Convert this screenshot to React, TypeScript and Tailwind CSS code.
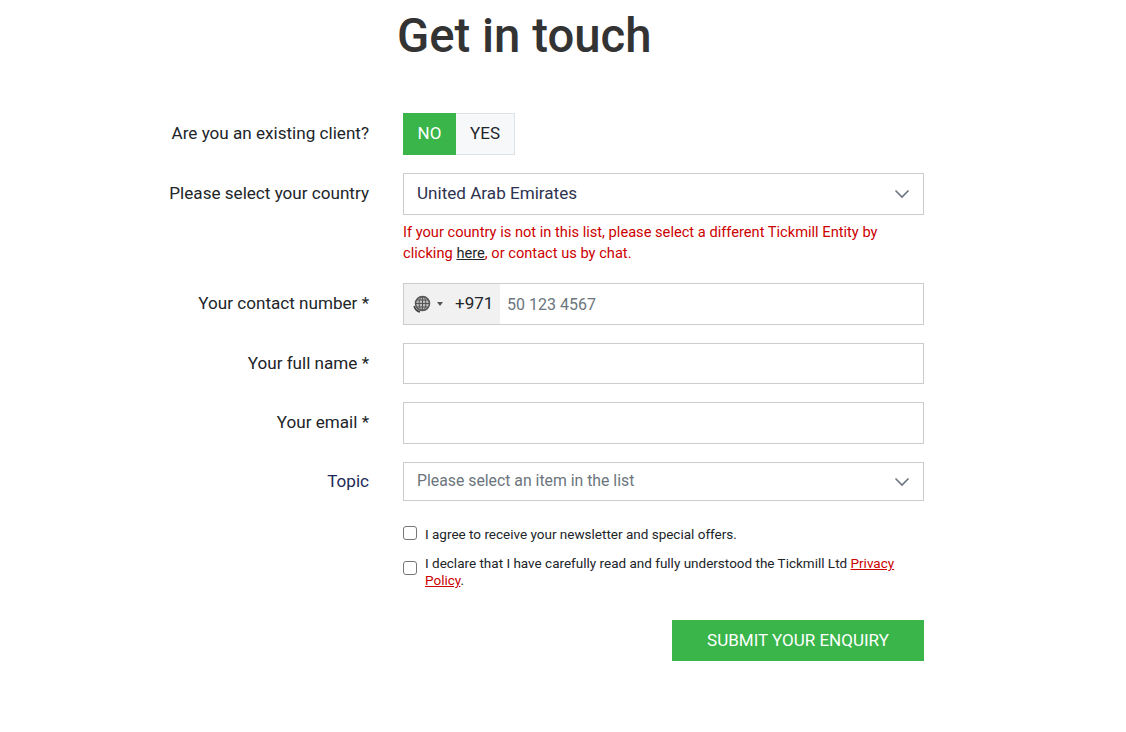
import React from "react";

const font = { fontFamily: "Roboto, sans-serif" };

function Chevron() {
  return (
    <svg width="16" height="10" viewBox="0 0 16 10" fill="none" className="shrink-0">
      <path d="M1.5 1.5 L8 8 L14.5 1.5" stroke="#6c757d" strokeWidth="1.6" />
    </svg>
  );
}

function Globe() {
  return (
    <svg width="18" height="18" viewBox="0 0 18 18" fill="none" className="shrink-0">
      <circle cx="9.5" cy="8.5" r="7" fill="#bbb" stroke="#555" strokeWidth="1.5" />
      <ellipse cx="9.5" cy="8.5" rx="3.4" ry="7" stroke="#555" strokeWidth="1" />
      <path d="M9.5 1.5V15.5M2.5 8.5H16.5M3.6 5H15.4M3.6 12H15.4" stroke="#555" strokeWidth="1" />
      <path d="M1.2 11 A8.6 8.6 0 0 0 7 17" stroke="#444" strokeWidth="1.8" />
    </svg>
  );
}

function Row({ label, children, mb, labelClass }: { label: string; children: React.ReactNode; mb: string; labelClass?: string }) {
  return (
    <div className={`flex ${mb}`}>
      <label className={`w-[209px] shrink-0 text-right text-[17.1px] leading-[22px] ${labelClass ?? "pt-[9px] text-[#212529]"}`}>{label}</label>
      <div className="ml-[34px] w-[521px]">{children}</div>
    </div>
  );
}

export default function App() {
  return (
    <div className="bg-white min-h-[732px] w-[1126px] overflow-hidden" style={font}>
      <h1 className="ml-[397px] pt-[8px] text-[47.3px] leading-[56px] font-medium text-[#333333] h-[113px]">Get in touch</h1>
      <form className="ml-[160px] w-[764px]">
        <Row label="Are you an existing client?" mb="mb-[18px]">
          <div className="flex h-[42px] text-[17px]">
            <div className="w-[53px] bg-[#39b54a] text-white flex items-center justify-center">NO</div>
            <div className="w-[59px] bg-[#f7f8fa] border border-[#dee2e6] border-l-0 text-[#212529] flex items-center justify-center">YES</div>
          </div>
        </Row>
        <Row label="Please select your country" mb="mb-[19px]">
          <div className="h-[42px] border border-[#ccc] flex items-center justify-between pl-[13px] pr-[13px] text-[17.1px] text-[#2e3350]">
            <span>United Arab Emirates</span>
            <Chevron />
          </div>
          <p className="mt-[7px] text-[14.65px] leading-[21px] text-[#cc0000]">
            If your country is not in this list, please select a different Tickmill Entity by clicking <a className="underline text-[#212529]">here</a>, or contact us by chat.
          </p>
        </Row>
        <Row label="Your contact number *" mb="mb-[18px]">
          <div className="h-[42px] border border-[#ccc] flex items-stretch">
            <div className="w-[96px] bg-[#f1f1f1] flex items-center pl-[9px]">
              <Globe />
              <span className="ml-[6px] w-0 h-0 border-x-[3px] border-x-transparent border-t-[4px] border-t-[#555]" />
              <span className="ml-[12px] text-[17px] text-[#212529]">+971</span>
            </div>
            <div className="flex items-center pl-[7px] pt-[2px] text-[16px] text-[#6c757d]">50 123 4567</div>
          </div>
        </Row>
        <Row label="Your full name *" mb="mb-[18px]">
          <div className="h-[41px] border border-[#ccc]" />
        </Row>
        <Row label="Your email *" mb="mb-[18px]">
          <div className="h-[42px] border border-[#ccc]" />
        </Row>
        <Row label="Topic" mb="mb-[22px]" labelClass="pt-[8px] text-[#1d2b5a]">
          <div className="h-[39px] border border-[#ccc] flex items-center justify-between pl-[13px] pr-[13px] text-[15.8px] text-[#6c757d]">
            <span className="-mt-[1px]">Please select an item in the list</span>
            <Chevron />
          </div>
        </Row>
        <div className="ml-[243px] w-[521px] text-[13.5px] leading-[17px] text-[#212529]">
          <div className="flex items-center h-[20px] mb-[11px] pt-[2px]">
            <span className="w-[14px] h-[14px] border-[1.5px] border-[#767676] rounded-[3px] shrink-0 -mt-[2px]" />
            <span className="ml-[8px]">I agree to receive your newsletter and special offers.</span>
          </div>
          <div className="flex items-start pt-[1px]">
            <span className="w-[14px] h-[14px] mt-[6px] border-[1.5px] border-[#767676] rounded-[3px] shrink-0" />
            <span className="ml-[8px]">
              I declare that I have carefully read and fully understood the Tickmill Ltd <a className="underline text-[#cc0000]">Privacy Policy</a>.
            </span>
          </div>
          <div className="flex justify-end mt-[31px]">
            <button type="button" className="w-[252px] h-[41px] bg-[#39b54a] text-white text-[17px] flex items-center justify-center">SUBMIT YOUR ENQUIRY</button>
          </div>
        </div>
      </form>
    </div>
  );
}
